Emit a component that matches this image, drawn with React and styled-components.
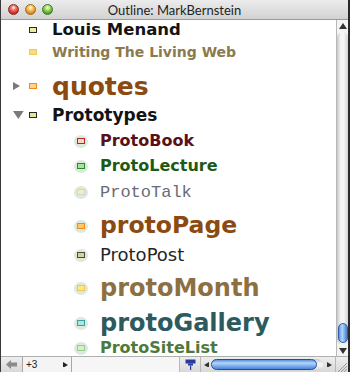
import React from "react";
import styled, { createGlobalStyle } from "styled-components";

const Global = createGlobalStyle`
  html, body { margin: 0; padding: 0; background: #fff; }
  body { font-family: "DejaVu Sans", "Liberation Sans", sans-serif; }
`;

const Window = styled.div`
  width: 350px;
  height: 372px;
  display: flex;
  flex-direction: column;
  box-sizing: border-box;
  border-left: 1px solid #3a3a3a;
  border-right: 2px solid #2a2a2a;
  background: #fff;
  overflow: hidden;
`;

const TitleBar = styled.div`
  height: 20px;
  flex: none;
  box-sizing: border-box;
  display: flex;
  align-items: center;
  position: relative;
  background: linear-gradient(#ececec, #d2d2d2);
  border-bottom: 1px solid #9a9a9a;
`;

const Lights = styled.div`
  display: flex;
  gap: 6px;
  padding-left: 7px;
`;

const Light = styled.span`
  width: 11px;
  height: 11px;
  border-radius: 50%;
  box-sizing: border-box;
  border: 1px solid ${(p) => p.$edge};
  background: radial-gradient(circle at 50% 30%, #fff 0, ${(p) => p.$light} 30%, ${(p) => p.$color} 75%);
`;

const Title = styled.div`
  position: absolute;
  left: 0;
  right: 0;
  text-align: center;
  font-family: "Lato", "DejaVu Sans", sans-serif;
  font-size: 13px;
  color: #1e1e1e;
  pointer-events: none;
`;

const Body = styled.div`
  flex: 1;
  display: flex;
  min-height: 0;
`;

const Outline = styled.div`
  flex: 1;
  overflow: hidden;
  display: flex;
  flex-direction: column;
`;

const Row = styled.div`
  display: flex;
  align-items: center;
  flex: none;
  height: ${(p) => p.$h}px;
  margin-top: ${(p) => p.$mt}px;
  padding-left: ${(p) => p.$indent}px;
`;

const Toggle = styled.span`
  width: 16px;
  flex: none;
  display: flex;
  align-items: center;
  justify-content: flex-start;
  padding-left: 3px;
  box-sizing: border-box;
`;

const IconSlot = styled.span`
  width: 14px;
  height: 13px;
  flex: none;
  display: flex;
  align-items: center;
  justify-content: center;
  border-radius: 50%;
  background: ${(p) => (p.$halo ? "#dbeadb" : "transparent")};
`;

const NodeIcon = styled.span`
  width: 8px;
  height: 6px;
  box-sizing: border-box;
  border: 1px solid ${(p) => p.$edge};
  background: ${(p) => p.$fill};
`;

const Label = styled.span`
  margin-left: 12px;
  white-space: nowrap;
  line-height: 1;
  font-family: ${(p) => (p.$mono ? '"Liberation Mono", "DejaVu Sans Mono", monospace' : '"DejaVu Sans", "Liberation Sans", sans-serif')};
  font-weight: ${(p) => (p.$light ? 400 : 700)};
  font-size: ${(p) => p.$size}px;
  color: ${(p) => p.$color};
`;

const VScroll = styled.div`
  width: 12px;
  flex: none;
  display: flex;
  flex-direction: column;
  align-items: center;
  box-sizing: border-box;
  border-left: 1px solid #b8b8b8;
  background: #f4f4f4;
`;

const ArrowBtn = styled.div`
  height: ${(p) => p.$h}px;
  width: ${(p) => (p.$w ? `${p.$w}px` : "100%")};
  flex: none;
  display: flex;
  align-items: center;
  justify-content: center;
`;

const Track = styled.div`
  flex: 1;
  width: 11px;
  box-sizing: border-box;
  border-radius: 6px;
  background: linear-gradient(90deg, #c8c8c8, #f6f6f6 35%, #f6f6f6 60%, #d4d4d4);
  display: flex;
  flex-direction: column;
  justify-content: flex-end;
  align-items: center;
  padding-bottom: 2px;
`;

const VThumb = styled.div`
  width: 10px;
  height: 20px;
  border-radius: 5px;
  border: 1px solid #2d5fa8;
  box-sizing: border-box;
  background: linear-gradient(90deg, #5f93d8, #b8d8fb 40%, #8cb9ef 60%, #4a80cc);
`;

const BottomBar = styled.div`
  height: 16px;
  flex: none;
  display: flex;
  align-items: center;
  box-sizing: border-box;
  border-top: 1px solid #b0b0b0;
  background: linear-gradient(#eeeeee, #d8d8d8);
`;

const BackBtn = styled.div`
  width: 21px;
  height: 100%;
  display: flex;
  align-items: center;
  justify-content: center;
  flex: none;
`;

const Field = styled.div`
  width: 50px;
  height: 100%;
  box-sizing: border-box;
  border-left: 1px solid #a8a8a8;
  border-right: 1px solid #a8a8a8;
  background: #f4f4f4;
  display: flex;
  align-items: center;
  justify-content: space-between;
  padding: 0 3px;
  font-family: "Liberation Sans", sans-serif;
  font-size: 10px;
  color: #222;
  flex: none;
`;

const Spacer = styled.div`
  flex: 1;
  height: 100%;
  background: #f6f6f6;
`;

const PinBtn = styled.div`
  width: 20px;
  height: 100%;
  flex: none;
  display: flex;
  align-items: center;
  justify-content: center;
  border-left: 1px solid #b8b8b8;
`;

const HScroll = styled.div`
  width: 135px;
  height: 100%;
  flex: none;
  display: flex;
  align-items: center;
  box-sizing: border-box;
  border-left: 1px solid #b8b8b8;
`;

const HTrack = styled.div`
  flex: 1;
  height: 12px;
  border-radius: 6px;
  display: flex;
  align-items: center;
  background: linear-gradient(#c8c8c8, #f6f6f6 40%, #f0f0f0 60%, #d0d0d0);
`;

const HThumb = styled.div`
  width: 106px;
  height: 11px;
  border-radius: 6px;
  border: 1px solid #244f98;
  box-sizing: border-box;
  background: linear-gradient(#5e92dc, #b6d6fb 35%, #86b6f0 60%, #4a84d8);
`;

const Grip = styled.div`
  width: 12px;
  height: 100%;
  flex: none;
  border-left: 1px solid #b8b8b8;
`;

const Tri = ({ dir = "right", color = "#222", size = 6 }) => {
  const pts = {
    right: "0,0 6,3.5 0,7",
    left: "6,0 0,3.5 6,7",
    down: "0,0 8,0 4,6",
    up: "0,6 8,6 4,0",
  }[dir];
  const w = dir === "down" || dir === "up" ? 8 : 6;
  const h = dir === "down" || dir === "up" ? 6 : 7;
  return (
    <svg width={(w * size) / 6} height={(h * size) / 6} viewBox={`0 0 ${w} ${h}`}>
      <polygon points={pts} fill={color} />
    </svg>
  );
};

const rows = [
  { text: "Louis Menand", size: 16.5, color: "#141414", h: 20, mt: 0, level: 1, edge: "#2a2a2a", fill: "#ecec9c" },
  { text: "Writing The Living Web", size: 14, color: "#8a7a4c", h: 20, mt: 2, level: 1, edge: "#f0c860", fill: "#f8dc78" },
  { text: "quotes", size: 25, color: "#8a4a12", h: 32, mt: 8, level: 1, edge: "#f08a20", fill: "#ffd48c", toggle: "right" },
  { text: "Prototypes", size: 17, color: "#141414", h: 20, mt: 3, level: 1, edge: "#2a2a2a", fill: "#e4e494", toggle: "down" },
  { text: "ProtoBook", size: 16, color: "#5a1015", h: 20, mt: 6, level: 2, edge: "#b02828", fill: "#f4d8c4" },
  { text: "ProtoLecture", size: 16, color: "#1c5a16", h: 20, mt: 5, level: 2, edge: "#2a8a2a", fill: "#a8e4a0" },
  { text: "ProtoTalk", size: 17, color: "#6a6a78", h: 20, mt: 6, level: 2, edge: "#d0d0e4", fill: "#f4f0b4", mono: true, light: true },
  { text: "protoPage", size: 23.5, color: "#8a4a12", h: 30, mt: 9, level: 2, edge: "#f08a20", fill: "#ffc868" },
  { text: "ProtoPost", size: 18, color: "#262626", h: 20, mt: 4, level: 2, edge: "#4a4a4a", fill: "#d8d098", light: true },
  { text: "protoMonth", size: 24, color: "#8c7042", h: 30, mt: 8, level: 2, edge: "#f2c850", fill: "#ffe488" },
  { text: "protoGallery", size: 24, color: "#2c5a5e", h: 30, mt: 5, level: 2, edge: "#3aa0a0", fill: "#b4e4e0" },
  { text: "ProtoSiteList", size: 16, color: "#4c7a3c", h: 16, mt: 2, level: 2, edge: "#98cc90", fill: "#d4f0c4" },
];

export default function App() {
  return (
    <>
      <Global />
      <Window>
        <TitleBar>
          <Lights>
            <Light $color="#c8241e" $light="#f07a70" $edge="#8a2a24" />
            <Light $color="#d8861a" $light="#fcc860" $edge="#9a6a20" />
            <Light $color="#4c9a20" $light="#a8e070" $edge="#3a7a22" />
          </Lights>
          <Title>Outline: MarkBernstein</Title>
        </TitleBar>
        <Body>
          <Outline>
            {rows.map((r) => (
              <Row key={r.text} $h={r.h} $mt={r.mt} $indent={r.level === 1 ? 9 : 57}>
                <Toggle>{r.toggle && <Tri dir={r.toggle} color="#7a7a7a" size={r.toggle === "down" ? 8 : 7} />}</Toggle>
                <IconSlot $halo={r.level === 2}>
                  <NodeIcon $edge={r.edge} $fill={r.fill} />
                </IconSlot>
                <Label $size={r.size} $color={r.color} $mono={r.mono} $light={r.light}>
                  {r.text}
                </Label>
              </Row>
            ))}
          </Outline>
          <VScroll>
            <ArrowBtn $h={12}>
              <Tri dir="up" color="#333" size={6} />
            </ArrowBtn>
            <Track>
              <VThumb />
            </Track>
            <ArrowBtn $h={11}>
              <Tri dir="down" color="#333" size={6} />
            </ArrowBtn>
          </VScroll>
        </Body>
        <BottomBar>
          <BackBtn>
            <svg width="12" height="9" viewBox="0 0 12 9">
              <polygon points="0,4.5 5,0 5,2.5 11,2.5 11,6.5 5,6.5 5,9" fill="#8a8a8a" />
            </svg>
          </BackBtn>
          <Field>
            <span>+3</span>
            <Tri dir="right" color="#222" size={5} />
          </Field>
          <Spacer />
          <PinBtn>
            <svg width="11" height="11" viewBox="0 0 11 11">
              <rect x="0.5" y="0.5" width="10" height="4" fill="#2a3a9a" />
              <rect x="3" y="4.5" width="5" height="2" fill="#2a3a9a" />
              <rect x="5" y="6.5" width="1.2" height="4.5" fill="#2a3a9a" />
            </svg>
          </PinBtn>
          <HScroll>
            <ArrowBtn $h={14} $w={10}>
              <Tri dir="left" color="#333" size={5} />
            </ArrowBtn>
            <HTrack>
              <HThumb />
            </HTrack>
            <ArrowBtn $h={14} $w={12}>
              <Tri dir="right" color="#333" size={5} />
            </ArrowBtn>
          </HScroll>
          <Grip>
            <svg width="11" height="14" viewBox="0 0 11 14">
              <line x1="2" y1="14" x2="11" y2="5" stroke="#999" />
              <line x1="5" y1="14" x2="11" y2="8" stroke="#999" />
              <line x1="8" y1="14" x2="11" y2="11" stroke="#999" />
            </svg>
          </Grip>
        </BottomBar>
      </Window>
    </>
  );
}
